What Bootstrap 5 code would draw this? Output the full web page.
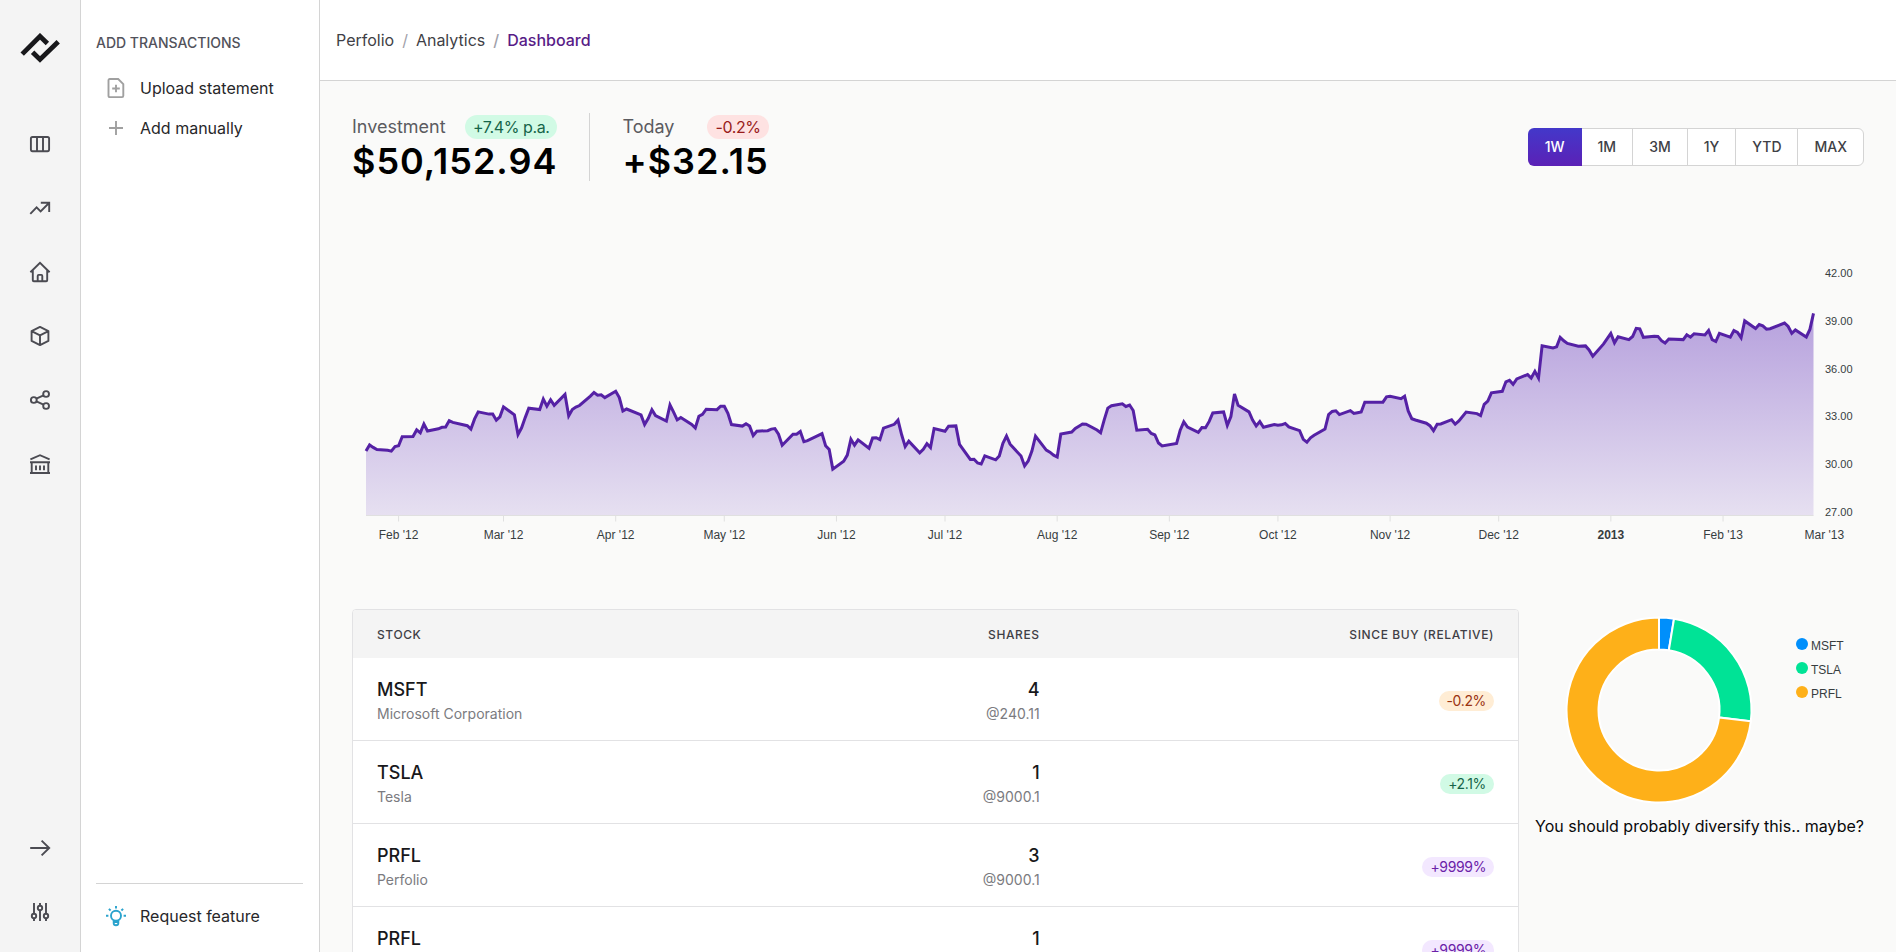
<!DOCTYPE html>
<html lang="en">
<head>
<meta charset="utf-8">
<meta name="viewport" content="width=device-width, initial-scale=1">
<title>Perfolio – Dashboard</title>
<link rel="stylesheet" href="https://cdn.jsdelivr.net/npm/bootstrap@5.3.0/dist/css/bootstrap.min.css">
<style>
  body { font-family: Inter, "Open Sans", sans-serif; font-size: 16px; line-height: 24px; color: #09090b; background: #fafaf9; }
  a { color: inherit; text-decoration: none; }
  .icon { width: 24px; height: 24px; fill: none; stroke: currentColor; stroke-width: 1.9; flex: none; }

  .rail { width: 81px; background: #f4f4f4; border-right: 1px solid #d4d4d4; color: #4b4b52; }
  .rail-logo { height: 96px; }
  .rail-logo svg { width: 40px; height: 30px; fill: none; stroke: #18181b; stroke-width: 4.8; }
  .rail-link { height: 64px; }

  .panel { width: 239px; background: #fff; border-right: 1px solid #d4d4d4; padding: 32px 16px 16px 15px; }
  .panel-title { font-size: 14px; line-height: 20px; font-weight: 500; color: #52525b; margin: 1px 0 15px; }
  .panel-link { height: 40px; padding-left: 8px; gap: 12px; color: #27272a; }
  .panel-link .icon { color: #a0a0a0; }
  .panel-link .icon-idea { color: #2aa3cd; }
  .panel-foot { border-top: 1px solid #d4d4d4; padding-top: 12px; }

  .topbar { height: 81px; background: #fff; border-bottom: 1px solid #d4d4d4; padding: 0 16px; color: #3f3f46; }
  .breadcrumb { --bs-breadcrumb-divider-color: #a1a1aa; --bs-breadcrumb-item-active-color: #581c87; }
  .page { padding: 32px; overflow-y: auto; scrollbar-width: none; }
  .page::-webkit-scrollbar { display: none; }

  .stat-label { font-size: 18px; line-height: 28px; color: #5b5b60; }
  .stat-value { font-size: 36px; line-height: 40px; font-weight: 600; letter-spacing: 1px; color: #000; }
  .stat + .stat { border-left: 1px solid #d4d4d4; padding-left: 32px; margin-left: 32px; }
  .pill { border-radius: 12px; padding: 0 8px; font-weight: 400; font-size: 16px; line-height: 24px; letter-spacing: -.025em; }
  .pill-sm { font-size: 14px; line-height: 20px; display: inline-block; }
  .pill-green { background: #d1fae5; color: #166549; }
  .pill-red { background: #fee2e2; color: #991b1b; }
  .pill-orange { background: #ffedd5; color: #9a3412; }
  .pill-purple { background: #f3e8ff; color: #6b21a8; }

  .btn-range { --bs-btn-font-size: 14px; --bs-btn-line-height: 20px; --bs-btn-font-weight: 500; --bs-btn-padding-x: 16px; --bs-btn-padding-y: 8px;
    --bs-btn-bg: #fff; --bs-btn-color: #3f3f46; --bs-btn-border-color: #d4d4d4; --bs-btn-border-radius: 6px; --bs-btn-active-color: #fff;
    --bs-btn-active-border-color: transparent; --bs-btn-hover-bg: #f4f4f4; --bs-btn-hover-color: #3f3f46; --bs-btn-hover-border-color: #d4d4d4; }
  .btn-range.active { background: linear-gradient(#4338ca, #5b21b6) border-box; }

  .plot text, .donut text { font-family: "Liberation Sans", Arial, sans-serif; font-size: 12px; fill: #373d3f; }
  .plot .y-label { font-size: 11px; }
  .plot { display: block; width: 100%; }

  .holdings { border: 1px solid #e2e2e4; border-radius: 4px; overflow: hidden; background: #fff; }
  .holdings th { background: #f4f4f4; color: #3f3f46; font-size: 12px; line-height: 16px; font-weight: 500; letter-spacing: .05em; padding: 17px 24px 15px; border: 0; }
  .holdings td { padding: 18px 24px 16px; border-color: #e2e2e4; background: #fff; vertical-align: middle; }
  .ticker { font-size: 18px; line-height: 28px; font-weight: 500; color: #18181b; }
  .detail { font-size: 14px; line-height: 20px; color: #7b7b80; }
  .donut { display: block; width: 328px; }
</style>
</head>
<body>
<div class="d-flex vh-100 overflow-hidden">
  <nav class="rail d-flex flex-column flex-shrink-0 pb-2" aria-label="Main">
    <a href="#" class="rail-logo d-flex align-items-center justify-content-center mb-3" aria-label="Perfolio">
      <svg viewBox="0 0 40 30"><path d="M2.200 21.100 20 3.300l7.400 7.200M12.600 19.200l7.400 7.300L38.200 8.800"/></svg>
    </a>
    <a href="#" class="rail-link d-flex align-items-center justify-content-center" aria-label="Boards">
      <svg class="icon" viewBox="0 0 24 24"><rect x="2.900" y="5" width="18.200" height="14.200" rx="1.600"/><path d="M9 5v14M15 5v14"/></svg></a>
    <a href="#" class="rail-link d-flex align-items-center justify-content-center" aria-label="Trends">
      <svg class="icon" viewBox="0 0 24 24"><path d="m2.300 17.800 6.300-6.400 4 4L21 7M12.800 6.800h8.400V16"/></svg></a>
    <a href="#" class="rail-link d-flex align-items-center justify-content-center" aria-label="Real estate">
      <svg class="icon" viewBox="0 0 24 24"><path d="M2.400 12.300 12 2.800l9.600 9.500M4.800 10.500v9.800q0 1 1 1h12.400q1 0 1-1v-9.800M9.700 21.300v-5.400q0-1 1-1h2.600q1 0 1 1v5.400"/></svg></a>
    <a href="#" class="rail-link d-flex align-items-center justify-content-center" aria-label="Assets">
      <svg class="icon" viewBox="0 0 24 24" stroke-linejoin="round"><path d="m12 2.900 8.400 4.200v9.800L12 21.100l-8.400-4.200V7.100zM3.600 7.100l8.400 4.200 8.400-4.200M12 11.300v9.800"/></svg></a>
    <a href="#" class="rail-link d-flex align-items-center justify-content-center" aria-label="Share">
      <svg class="icon" viewBox="0 0 24 24"><circle cx="5.800" cy="12" r="2.900"/><circle cx="18.100" cy="6" r="2.900"/><circle cx="18.100" cy="18" r="2.900"/><path d="m8.400 10.700 7.100-3.400M8.400 13.300l7.100 3.400"/></svg></a>
    <a href="#" class="rail-link d-flex align-items-center justify-content-center" aria-label="Banks">
      <svg class="icon" viewBox="0 0 24 24"><path d="M2.400 7.400 12 3.200l9.600 4.200M2 10.300h20M3.700 10.300V21M20.300 10.300V21M2 21h20M8 13.600v4.600M12 13.600v4.600M16 13.600v4.600"/></svg></a>
    <a href="#" class="rail-link d-flex align-items-center justify-content-center mt-auto" aria-label="Expand">
      <svg class="icon" viewBox="0 0 24 24"><path d="M2.200 12h19M13.600 4.600l7.600 7.400-7.600 7.400"/></svg></a>
    <a href="#" class="rail-link d-flex align-items-center justify-content-center" aria-label="Settings">
      <svg class="icon" viewBox="0 0 24 24"><circle cx="6" cy="16" r="2.200"/><circle cx="12" cy="8" r="2.200"/><circle cx="18" cy="16" r="2.200"/><path d="M6 3v10.800M6 18.200V21M12 3v2.800M12 10.200V21M18 3v10.800M18 18.200V21"/></svg></a>
  </nav>

  <aside class="panel d-flex flex-column flex-shrink-0">
    <h2 class="panel-title">ADD TRANSACTIONS</h2>
    <a href="#" class="panel-link d-flex align-items-center">
      <svg class="icon" viewBox="0 0 24 24"><path d="M5.800 3h8.400l5.100 5.200v11.600q0 1.300-1.300 1.300H5.800q-1.300 0-1.300-1.300V4.300Q4.500 3 5.800 3zM12 8.700v7.600M8.200 12.500h7.600"/></svg>
      Upload statement</a>
    <a href="#" class="panel-link d-flex align-items-center">
      <svg class="icon" viewBox="0 0 24 24"><path d="M12 5v14M5 12h14"/></svg>
      Add manually</a>
    <div class="panel-foot mt-auto">
      <a href="#" class="panel-link d-flex align-items-center">
        <svg class="icon icon-idea" viewBox="0 0 24 24"><circle cx="12" cy="11.700" r="5"/><path d="M9.700 16.500v2.700q0 2 2.300 2t2.300-2v-2.700M9.700 18h4.600M12 2v2.400M2 11.700h2.400M19.600 11.700H22M4.900 4.800l1.700 1.700M19.100 4.800l-1.700 1.700"/></svg>
        Request feature</a>
    </div>
  </aside>

  <div class="d-flex flex-column flex-grow-1 overflow-hidden">
    <header class="topbar d-flex align-items-center flex-shrink-0">
      <nav aria-label="Breadcrumb">
        <ol class="breadcrumb mb-0">
          <li class="breadcrumb-item"><a href="#">Perfolio</a></li>
          <li class="breadcrumb-item"><a href="#">Analytics</a></li>
          <li class="breadcrumb-item active fw-medium" aria-current="page">Dashboard</li>
        </ol>
      </nav>
    </header>

    <main class="page flex-grow-1">
      <section class="d-flex align-items-center justify-content-between mb-3">
        <div class="d-flex">
          <div class="stat">
            <div class="stat-label d-flex align-items-center justify-content-between">Investment <span class="pill pill-green">+7.4% p.a.</span></div>
            <div class="stat-value">$50,152.94</div>
          </div>
          <div class="stat">
            <div class="stat-label d-flex align-items-center justify-content-between">Today <span class="pill pill-red">-0.2%</span></div>
            <div class="stat-value">+$32.15</div>
          </div>
        </div>
        <div class="btn-group" role="group" aria-label="Time range">
          <button type="button" class="btn btn-range active">1W</button>
          <button type="button" class="btn btn-range">1M</button>
          <button type="button" class="btn btn-range">3M</button>
          <button type="button" class="btn btn-range">1Y</button>
          <button type="button" class="btn btn-range">YTD</button>
          <button type="button" class="btn btn-range">MAX</button>
        </div>
      </section>

      <svg class="plot mb-3" id="plot" viewBox="0 0 1512 396" role="img" aria-label="Portfolio value">
        <defs>
          <linearGradient id="fade" x1="0" y1="0" x2="0" y2="1">
            <stop offset="0" stop-color="#5521b5" stop-opacity=".41"/>
            <stop offset="1" stop-color="#5521b5" stop-opacity=".12"/>
          </linearGradient>
        </defs>
      </svg>

      <section class="d-flex align-items-start gap-3">
        <div class="holdings flex-grow-1">
          <table class="table mb-0">
            <colgroup><col style="width:40%"><col style="width:21%"><col style="width:39%"></colgroup>
            <thead>
              <tr><th scope="col">STOCK</th><th scope="col" class="text-end">SHARES</th><th scope="col" class="text-end">SINCE BUY (RELATIVE)</th></tr>
            </thead>
            <tbody>
              <tr>
                <td><div class="ticker">MSFT</div><div class="detail">Microsoft Corporation</div></td>
                <td class="text-end"><div class="ticker">4</div><div class="detail">@240.11</div></td>
                <td class="text-end"><span class="pill pill-sm pill-orange">-0.2%</span></td>
              </tr>
              <tr>
                <td><div class="ticker">TSLA</div><div class="detail">Tesla</div></td>
                <td class="text-end"><div class="ticker">1</div><div class="detail">@9000.1</div></td>
                <td class="text-end"><span class="pill pill-sm pill-green">+2.1%</span></td>
              </tr>
              <tr>
                <td><div class="ticker">PRFL</div><div class="detail">Perfolio</div></td>
                <td class="text-end"><div class="ticker">3</div><div class="detail">@9000.1</div></td>
                <td class="text-end"><span class="pill pill-sm pill-purple">+9999%</span></td>
              </tr>
              <tr>
                <td><div class="ticker">PRFL</div><div class="detail">Perfolio</div></td>
                <td class="text-end"><div class="ticker">1</div><div class="detail">@9000.1</div></td>
                <td class="text-end"><span class="pill pill-sm pill-purple">+9999%</span></td>
              </tr>
            </tbody>
          </table>
        </div>
        <div class="flex-shrink-0">
          <svg class="donut" id="donut" viewBox="0 0 328 205" role="img" aria-label="Allocation"></svg>
          <div>You should probably diversify this.. maybe?</div>
        </div>
      </section>
    </main>
  </div>
</div>

<script src="https://cdn.jsdelivr.net/npm/bootstrap@5.3.0/dist/js/bootstrap.bundle.min.js"></script>
<script>
  // Day number since the first quote, then the price on that day.
  const quotes = `0 30.95,1 31.34,2 31.18,3 31.05,6 31,7 30.95,8 31.24,9 31.29,10 31.85,13 31.86,14 32.28,15 32.1,16 32.65,17 32.21,20 32.35,21 32.44,22 32.46,23 32.86,24 32.75,28 32.54,29 32.33,30 32.97,31 33.41,34 33.27,35 33.27,36 32.89,37 33.1,38 33.73,41 33.22,42 31.99,43 32.41,44 33.05,45 33.64,48 33.56,49 34.22,50 33.77,51 34.17,52 33.82,55 34.51,56 33.16,57 33.56,58 33.71,59 33.81,62 34.4,63 34.63,64 34.46,65 34.48,66 34.31,69 34.7,70 34.31,71 33.46,72 33.59,76 33.22,77 32.61,78 33.01,79 33.55,80 33.18,83 32.84,84 33.84,85 33.39,86 32.91,87 33.06,90 32.62,91 32.4,92 33.13,93 33.26,94 33.58,97 33.55,98 33.77,99 33.76,100 33.32,101 32.61,104 32.52,105 32.67,106 32.52,107 31.92,108 32.2,111 32.23,112 32.33,113 32.36,114 32.01,115 31.31,118 32.01,119 32.01,120 32.18,121 31.54,122 31.6,126 32.05,127 31.29,128 31.05,129 29.82,132 30.31,133 30.7,134 31.69,135 31.32,136 31.65,139 31.13,140 31.77,141 31.79,142 31.67,143 32.39,146 32.63,147 32.89,148 31.99,149 31.23,150 31.57,153 30.84,154 31.07,155 31.41,156 31.17,157 32.37,160 32.19,161 32.51,163 32.53,164 31.37,167 30.43,168 30.44,169 30.2,170 30.14,171 30.65,174 30.4,175 30.65,176 31.43,177 31.89,178 31.38,181 30.64,182 30.02,183 30.33,184 30.95,185 31.89,188 31.01,189 30.88,190 30.69,191 30.58,192 32.02,195 32.14,196 32.37,197 32.51,198 32.65,199 32.64,202 32.27,203 32.1,204 32.91,205 33.65,206 33.8,209 33.92,210 33.75,211 33.84,212 33.5,213 32.26,216 32.32,217 32.06,218 31.96,219 31.46,220 31.27,224 31.43,225 32.26,226 32.79,227 32.46,230 32.13,231 32.43,232 32.42,233 32.81,234 33.34,237 33.41,238 32.57,239 33.12,240 34.53,241 33.83,244 33.41,245 32.9,246 32.53,247 32.8,248 32.44,251 32.62,252 32.57,253 32.6,254 32.68,255 32.47,258 32.23,259 31.68,260 31.51,261 31.78,262 31.94,265 32.33,266 33.24,267 33.44,268 33.48,269 33.24,272 33.49,273 33.31,274 33.36,275 33.4,276 34.01,281 34.02,282 34.36,283 34.39,286 34.24,287 34.39,288 33.47,289 32.98,290 32.9,293 32.7,294 32.54,295 32.23,296 32.64,297 32.65,300 32.92,301 32.64,302 32.84,304 33.4,307 33.3,308 33.18,309 33.88,310 34.09,311 34.61,314 34.7,315 35.3,316 35.4,317 35.14,318 35.48,321 35.75,322 35.54,323 35.96,324 35.53,325 37.56,328 37.42,329 37.49,330 38.09,331 37.87,332 37.71,335 37.53,337 37.55,338 37.3,339 36.9,342 37.68,344 38.34,345 37.75,346 38.13,349 37.94,350 38.14,351 38.66,352 38.62,353 38.09,356 38.16,357 38.15,358 37.88,359 37.73,360 37.98,364 37.95,365 38.25,366 38.1,367 38.32,370 38.24,371 38.52,372 37.94,373 37.83,374 38.34,377 38.1,378 38.51,379 38.4,380 38.07,381 39.12,384 38.64,385 38.89,386 38.81,387 38.61,388 38.63,392 38.99,393 38.77,394 38.34,395 38.55,398 38.11,399 38.59,400 39.6`
    .split(',').map(q => q.split(' ').map(Number));

  const left = 14, right = 1461.5, base = 318.5;
  const x = d => left + d * (right - left) / 400;
  const y = v => 317 - (v - 27) * 15.93;
  const line = quotes.map(([d, v]) => x(d).toFixed(1) + ' ' + y(v).toFixed(1)).join('L');

  let out = `<path d="M${line}V${base}H${left}Z" fill="url(#fade)"/>
    <path d="M${left} ${base}H${right}" stroke="#e0e0e0"/>`;
  const months = [['Feb \'12', 9], ['Mar \'12', 38], ['Apr \'12', 69], ['May \'12', 99], ['Jun \'12', 130], ['Jul \'12', 160],
    ['Aug \'12', 191], ['Sep \'12', 222], ['Oct \'12', 252], ['Nov \'12', 283], ['Dec \'12', 313], ['2013', 344], ['Feb \'13', 375], ['Mar \'13', 403]];
  for (const [name, day] of months) {
    if (day <= 400) out += `<path d="M${x(day)} ${base}v6" stroke="#e0e0e0"/>`;
    out += `<text x="${x(day)}" y="342" text-anchor="middle"${name === '2013' ? ' font-weight="700"' : ''}>${name}</text>`;
  }
  for (let v = 27; v <= 42; v += 3)
    out += `<text class="y-label" x="1473" y="${Math.round(y(v)) + 2}">${v.toFixed(2)}</text>`;
  out += `<path d="M${line}" fill="none" stroke="#5521a5" stroke-width="3"/>`;
  document.getElementById('plot').insertAdjacentHTML('beforeend', out);

  // Allocation ring and its legend.
  const shares = [['MSFT', 960.44, '#008ffb'], ['TSLA', 9000.1, '#00e396'], ['PRFL', 27000.3, '#feb019']];
  const total = shares.reduce((s, a) => s + a[1], 0), cx = 124, cy = 101, R = 92.5, r = 60.5;
  const at = (rad, t) => `${(cx + rad * Math.sin(t)).toFixed(2)} ${(cy - rad * Math.cos(t)).toFixed(2)}`;
  let turn = 0, ring = '';
  shares.forEach(([name, value, color], i) => {
    const end = turn + value / total * 2 * Math.PI, big = end - turn > Math.PI ? 1 : 0;
    ring += `<path d="M${at(R, turn)}A${R} ${R} 0 ${big} 1 ${at(R, end)}L${at(r, end)}A${r} ${r} 0 ${big} 0 ${at(r, turn)}Z" fill="${color}" stroke="#fff" stroke-width="2"/>
      <circle cx="267" cy="${35 + i * 24}" r="6" fill="${color}"/><text x="276" y="${41 + i * 24}">${name}</text>`;
    turn = end;
  });
  document.getElementById('donut').innerHTML = ring;
</script>
</body>
</html>
